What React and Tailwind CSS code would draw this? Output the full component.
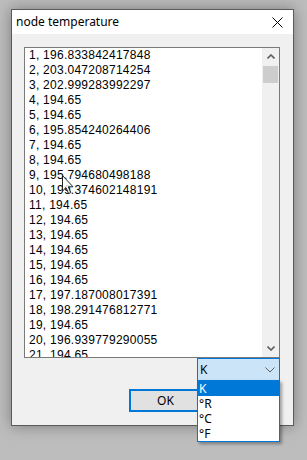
import React from "react";

const temps = [
  "196.833842417848",
  "203.047208714254",
  "202.999283992297",
  "194.65",
  "194.65",
  "195.854240264406",
  "194.65",
  "194.65",
  "195.794680498188",
  "199.374602148191",
  "194.65",
  "194.65",
  "194.65",
  "194.65",
  "194.65",
  "194.65",
  "197.187008017391",
  "198.291476812771",
  "194.65",
  "196.939779290055",
  "194.65",
];

const ui = { fontFamily: '"Noto Sans", "Open Sans", sans-serif' };
const list = { fontFamily: '"Liberation Sans", Arial, sans-serif' };

export default function App() {
  return (
    <div className="relative w-[307px] h-[460px] overflow-hidden bg-[#bdbdbd] pl-[11px] pt-[9px]">
      <div className="w-[283px] h-[417px] border border-[#5a5a5a] bg-[#f0f0f0] flex flex-col shadow-[0_0_14px_rgba(0,0,0,0.35)]">
        <div className="h-[24px] bg-white flex items-center justify-between pl-[4px] pr-[10px]">
          <span className="text-[12px] text-black leading-none" style={ui}>
            node temperature
          </span>
          <svg width="11" height="11" viewBox="0 0 11 11">
            <path d="M0.5 0.5 L10.5 10.5 M10.5 0.5 L0.5 10.5" stroke="#000" strokeWidth="1" fill="none" />
          </svg>
        </div>
        <div className="flex flex-col pl-[12px] pt-[13px]">
          <div className="w-[256px] h-[311px] border border-[#7a7a7a] bg-white flex">
            <div className="flex-1 overflow-hidden pl-[4px]">
              {temps.map((t, i) => (
                <div key={i} className="h-[15px] leading-[15px] text-[12px] tracking-[0.25px] text-black whitespace-nowrap" style={list}>
                  {i + 1}, {t}
                </div>
              ))}
            </div>
            <div className="w-[17px] bg-[#f0f0f0] flex flex-col">
              <div className="h-[17px] flex items-center justify-center">
                <svg width="8" height="5" viewBox="0 0 8 5">
                  <path d="M0.5 4.5 L4 1 L7.5 4.5" stroke="#606060" strokeWidth="1.6" fill="none" />
                </svg>
              </div>
              <div className="mt-[1px] ml-[1px] w-[15px] h-[17px] bg-[#cdcdcd]" />
              <div className="flex-1" />
              <div className="h-[17px] flex items-center justify-center">
                <svg width="8" height="5" viewBox="0 0 8 5">
                  <path d="M0.5 0.5 L4 4 L7.5 0.5" stroke="#606060" strokeWidth="1.6" fill="none" />
                </svg>
              </div>
            </div>
          </div>
          <div className="w-[256px] flex justify-end">
            <div className="relative w-[83px] h-[23px] border border-[#0078d7] bg-[#cce4f7] flex items-center justify-between pl-[2px] pr-[4px]">
              <span className="text-[12px] text-black leading-none" style={ui}>K</span>
              <svg width="10" height="6" viewBox="0 0 10 6">
                <path d="M0.5 0.5 L5 5 L9.5 0.5" stroke="#606060" strokeWidth="1" fill="none" />
              </svg>
              <div className="absolute left-[-1px] top-[21px] w-[83px] border border-[#0078d7] bg-white flex flex-col shadow-[2px_2px_3px_rgba(0,0,0,0.35)] z-10">
                {["K", "°R", "°C", "°F"].map((u, i) => (
                  <div
                    key={u}
                    className={
                      i === 0
                        ? "h-[15px] leading-[15px] text-[12px] pl-[1px] bg-[#0078d7] text-white"
                        : "h-[15px] leading-[15px] text-[12px] pl-[1px] text-black"
                    }
                    style={ui}
                  >
                    {u}
                  </div>
                ))}
              </div>
            </div>
          </div>
          <div className="mt-[8px] ml-[105px] w-[73px] h-[23px] border-2 border-[#0078d7] bg-[#e1e1e1] flex items-center justify-center">
            <span className="text-[12px] text-black leading-none" style={ui}>OK</span>
          </div>
        </div>
      </div>
      <svg className="absolute left-[62px] top-[175px]" width="13" height="20" viewBox="0 0 13 20">
        <path
          d="M0.5 0.5 L0.5 16 L4 12.6 L6.6 18.6 L8.8 17.6 L6.3 11.8 L11 11.8 Z"
          fill="#fff"
          fillOpacity="0.85"
          stroke="#222"
          strokeWidth="1"
          strokeLinejoin="round"
        />
      </svg>
    </div>
  );
}
